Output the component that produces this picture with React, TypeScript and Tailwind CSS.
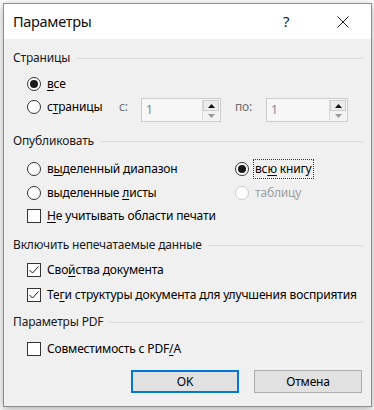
import React from 'react';

function Radio({ checked = false, disabled = false }: { checked?: boolean; disabled?: boolean }) {
  return (
    <span
      className={`shrink-0 w-[14px] h-[14px] rounded-full border bg-white flex items-center justify-center ${
        disabled ? 'border-[#cccccc]' : 'border-[#333333]'
      }`}
    >
      {checked && <span className="w-[8px] h-[8px] rounded-full bg-[#1a1a1a]" />}
    </span>
  );
}

function Check({ checked = false }: { checked?: boolean }) {
  return (
    <span className="shrink-0 w-[14px] h-[14px] border border-[#333333] bg-white flex items-center justify-center">
      {checked && (
        <svg width="12" height="12" viewBox="0 0 12 12">
          <polyline points="1.5,6 4.5,9 10.5,2.5" fill="none" stroke="#1a1a1a" strokeWidth="1" />
        </svg>
      )}
    </span>
  );
}

function SpinBox({ width }: { width: string }) {
  return (
    <div className={`${width} h-[24px] border border-[#cccccc] bg-[#f7f7f7] flex`}>
      <span className="flex-1 pl-[4px] leading-[22px] text-[#7a8a9a]">1</span>
      <div className="w-[17px] flex flex-col border-l border-[#d9d9d9] my-[1px] mr-[1px]">
        <div className="flex-1 flex items-center justify-center bg-[#ececec] border border-[#cfcfcf]">
          <svg width="7" height="4" viewBox="0 0 7 4">
            <polygon points="0,4 7,4 3.5,0" fill="#111111" />
          </svg>
        </div>
        <div className="flex-1 flex items-center justify-center bg-[#f2f2f2]">
          <svg width="7" height="4" viewBox="0 0 7 4">
            <polygon points="0,0 7,0 3.5,4" fill="#9a9a9a" />
          </svg>
        </div>
      </div>
    </div>
  );
}

function SectionHeader({ title, className = '' }: { title: string; className?: string }) {
  return (
    <div className={`h-[18px] flex items-center pr-[8px] ${className}`}>
      <span className="text-[#1a1a1a]">{title}</span>
      <div className="flex-1 h-px bg-[#dcdcdc] ml-[6px]" />
    </div>
  );
}

export default function App() {
  return (
    <div className="w-[374px] h-[410px] bg-white overflow-hidden font-['Segoe_UI','Noto_Sans',sans-serif] text-[12px] tracking-[-0.16px] text-black">
      <div className="ml-[3px] mt-[3px] w-[369px] h-[404px] border border-[#8f8f8f] bg-[#f0f0f0] flex flex-col shadow-[0_2px_8px_rgba(0,0,0,0.35)]">
        {/* Title bar */}
        <div className="h-[35px] bg-white flex items-center pl-[9px]">
          <span className="flex-1 text-[14.5px] tracking-[-0.3px] text-[#111111]">Параметры</span>
          <span className="text-[15px] text-[#222222] w-[10px] mr-[44px]">?</span>
          <svg width="12" height="12" viewBox="0 0 12 12" className="mr-[22px]">
            <line x1="0.5" y1="0.5" x2="11.5" y2="11.5" stroke="#222222" strokeWidth="1" />
            <line x1="11.5" y1="0.5" x2="0.5" y2="11.5" stroke="#222222" strokeWidth="1" />
          </svg>
        </div>

        {/* Body */}
        <div className="flex-1 flex flex-col pl-[9px] pt-[10px]">
          <SectionHeader title="Страницы" />
          <div className="pl-[14px] mt-[5px]">
            <div className="h-[23px] flex items-center gap-[6px]">
              <Radio checked />
              <span>
                <u className="underline-offset-2">в</u>се
              </span>
            </div>
            <div className="h-[23px] flex items-start">
              <div className="w-[92px] h-[23px] flex items-center gap-[6px]">
                <Radio />
                <span>
                  с<u className="underline-offset-2">т</u>раницы
                </span>
              </div>
              <span className="w-[22px] h-[23px] leading-[23px] text-[#6d6d6d]">с:</span>
              <div className="mt-[3px]">
                <SpinBox width="w-[80px]" />
              </div>
              <span className="ml-[14px] w-[31px] h-[23px] leading-[23px] text-[#6d6d6d]">по:</span>
              <div className="mt-[3px]">
                <SpinBox width="w-[82px]" />
              </div>
            </div>
          </div>

          <SectionHeader title="Опубликовать" className="mt-[14px]" />
          <div className="pl-[14px] mt-[6px]">
            <div className="grid grid-cols-[208px_1fr]">
              <div className="h-[25px] flex items-center gap-[6px]">
                <Radio />
                <span>
                  в<u className="underline-offset-2">ы</u>деленный диапазон
                </span>
              </div>
              <div className="h-[25px] flex items-center gap-[4px]">
                <Radio checked />
                <span className="border border-dotted border-[#333333] px-[1px] leading-[18px]">
                  вс<u className="underline-offset-2">ю</u> книгу
                </span>
              </div>
              <div className="h-[24px] flex items-center gap-[6px]">
                <Radio />
                <span>
                  выделенные <u className="underline-offset-2">л</u>исты
                </span>
              </div>
              <div className="h-[24px] flex items-center gap-[6px]">
                <Radio disabled />
                <span className="text-[#a0a0a0]">таблицу</span>
              </div>
            </div>
            <div className="h-[21px] flex items-center gap-[6px]">
              <Check />
              <span>
                <u className="underline-offset-2">Н</u>е учитывать области печати
              </span>
            </div>
          </div>

          <SectionHeader title="Включить непечатаемые данные" className="mt-[10px]" />
          <div className="pl-[14px] mt-[3px]">
            <div className="h-[25px] flex items-center gap-[6px]">
              <Check checked />
              <span>
                Сво<u className="underline-offset-2">й</u>ства документа
              </span>
            </div>
            <div className="h-[25px] flex items-center gap-[6px]">
              <Check checked />
              <span>
                Те<u className="underline-offset-2">г</u>и структуры документа для улучшения восприятия
              </span>
            </div>
          </div>

          <SectionHeader title="Параметры PDF" className="mt-[6px]" />
          <div className="pl-[14px] mt-[5px]">
            <div className="h-[25px] flex items-center gap-[6px]">
              <Check />
              <span>
                Совместимость с PDF<u className="underline-offset-2">/</u>A
              </span>
            </div>
          </div>

          <div className="flex justify-end gap-[15px] pr-[9px] mt-[9px]">
            <button className="w-[108px] h-[23px] bg-[#e1e1e1] border-2 border-[#0078d7] text-[12px]">OK</button>
            <button className="w-[108px] h-[23px] bg-[#e1e1e1] border border-[#adadad] text-[12px]">Отмена</button>
          </div>
        </div>
      </div>
    </div>
  );
}
